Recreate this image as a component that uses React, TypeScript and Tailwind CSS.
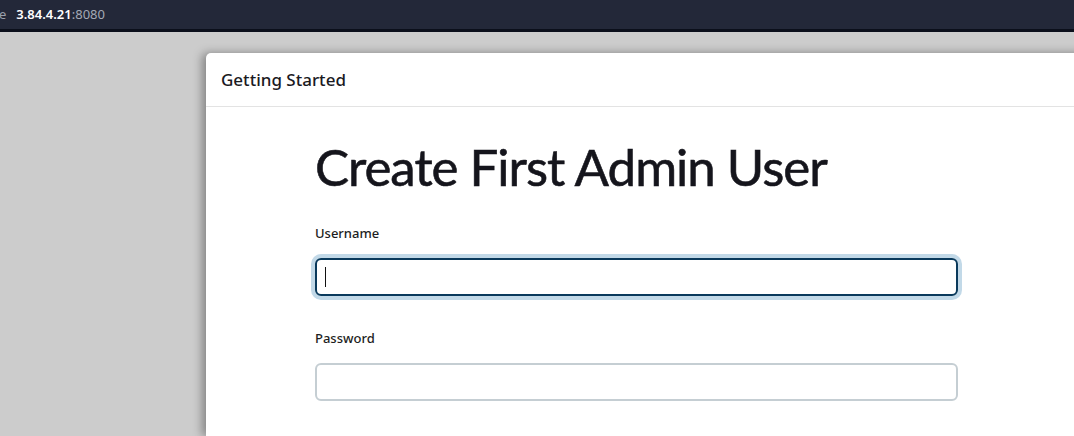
import React from 'react';

const App: React.FC = () => {
  return (
    <div className="flex h-[436px] w-[1074px] flex-col overflow-hidden bg-[#cccccc] font-['Noto_Sans',sans-serif]">
      <div className="flex h-[29px] shrink-0 items-center bg-[#232839] text-[13px]">
        <span className="-ml-[1px] text-[#9aa0ad]">e</span>
        <span className="ml-[10px] font-semibold text-white">3.84.4.21</span>
        <span className="text-[#a4a9b5]">:8080</span>
      </div>
      <div className="h-[3px] shrink-0 bg-[#0b0f1b]" />
      <div className="flex flex-1 flex-col pl-[206px] pt-[21px]">
        <div className="w-[1000px] flex-1 rounded-tl-[5px] bg-white shadow-[-4px_0_10px_rgba(0,0,0,0.35)]">
          <div className="flex h-[54px] items-center border-b border-[#e3e3e3] pl-[15px]">
            <h1 className="text-[17px] font-medium text-[#1a1a1f]">Getting Started</h1>
          </div>
          <div className="pl-[109px] pt-[29px]">
            <h2 className="font-['Lato',sans-serif] text-[51px] leading-[1.2] tracking-[-1px] text-[#15151c] [-webkit-text-stroke:0.6px_#15151c]">
              Create First Admin User
            </h2>
            <form className="mt-[27px] w-[643px]">
              <label className="block text-[13px] font-medium text-[#1d1d22]">Username</label>
              <div className="mt-[14px] h-[38px] rounded-[6px] border-2 border-[#0a3a5c] shadow-[0_0_0_4px_#c2d9e8]">
                <div className="ml-[8px] mt-[7px] h-[20px] w-px bg-[#111]" />
              </div>
              <label className="mt-[33px] block text-[13px] font-medium text-[#1d1d22]">Password</label>
              <div className="mt-[15px] h-[38px] rounded-[6px] border-2 border-[#c5ced3]" />
            </form>
          </div>
        </div>
      </div>
    </div>
  );
};

export default App;
